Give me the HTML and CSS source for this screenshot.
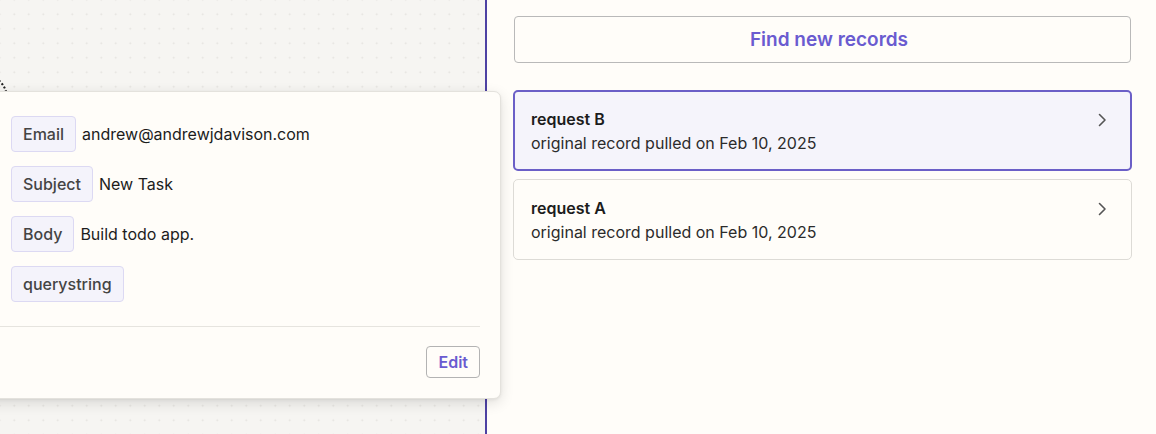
FILE: index.html
```html
<!DOCTYPE html>
<html>
<head>
<meta charset="utf-8">
<link rel="stylesheet" href="styles.css">
</head>
<body>
<div class="app">
  <div class="canvas">
    <div class="node-ring"></div>
  </div>
  <div class="panel">
    <button class="find-btn">Find new records</button>
    <div class="records">
      <div class="record selected">
        <div class="record-text">
          <div class="record-title">request B</div>
          <div class="record-sub">original record pulled on Feb 10, 2025</div>
        </div>
        <svg class="chev" width="12" height="16" viewBox="0 0 12 16"><path d="M3.5 2.5 L9 8 L3.5 13.5" fill="none" stroke="#555" stroke-width="1.6" stroke-linecap="round" stroke-linejoin="round"/></svg>
      </div>
      <div class="record">
        <div class="record-text">
          <div class="record-title">request A</div>
          <div class="record-sub">original record pulled on Feb 10, 2025</div>
        </div>
        <svg class="chev" width="12" height="16" viewBox="0 0 12 16"><path d="M3.5 2.5 L9 8 L3.5 13.5" fill="none" stroke="#555" stroke-width="1.6" stroke-linecap="round" stroke-linejoin="round"/></svg>
      </div>
    </div>
  </div>
  <div class="popover">
    <div class="fields">
      <div class="field"><span class="tag">Email</span><span class="val">andrew@andrewjdavison.com</span></div>
      <div class="field"><span class="tag">Subject</span><span class="val">New Task</span></div>
      <div class="field"><span class="tag">Body</span><span class="val">Build todo app.</span></div>
      <div class="field"><span class="tag">querystring</span></div>
    </div>
    <div class="pop-footer">
      <button class="edit-btn">Edit</button>
    </div>
  </div>
</div>
</body>
</html>
```
FILE: styles.css
```css
* { box-sizing: border-box; }
html, body { margin: 0; padding: 0; }
body {
  width: 1156px;
  height: 434px;
  overflow: hidden;
  font-family: Inter, "Noto Sans", sans-serif;
  background: #fffdf9;
}
.app {
  position: relative;
  display: flex;
  height: 434px;
}
.canvas {
  position: relative;
  width: 487px;
  flex: none;
  background-color: #f6f5f2;
  background-image: radial-gradient(circle, #e2e1dd 0.8px, transparent 1.1px);
  background-size: 14.5px 14.5px;
  background-position: 7px 7px;
  border-right: 2px solid #4d41a3;
}
.node-ring {
  position: absolute;
  left: -40px;
  top: 74px;
  width: 48px;
  height: 48px;
  border-radius: 50%;
  border: 2px dotted #222;
}
.panel {
  flex: 1;
  padding: 16px 25px 0 26px;
  display: flex;
  flex-direction: column;
}
.find-btn {
  height: 47px;
  margin: 0 0 0 1px;
  padding: 0 0 0 13px;
  background: #fffdf9;
  border: 1px solid #b9b9b9;
  border-radius: 4px;
  font-family: Inter, sans-serif;
  font-size: 19px;
  font-weight: 600;
  color: #6a5bd0;
}
.records {
  margin-top: 27px;
  margin-right: -1px;
  display: flex;
  flex-direction: column;
  gap: 8px;
}
.record {
  height: 81px;
  display: flex;
  align-items: flex-start;
  justify-content: space-between;
  border: 1px solid #dddbd6;
  border-radius: 5px;
  padding: 18px 23px 0 17px;
  background: #fffdf9;
}
.record.selected {
  border: 2px solid #6b5fc7;
  background: #f5f4fb;
  padding: 17px 22px 0 16px;
}
.record-title {
  font-size: 16px;
  line-height: 20px;
  font-weight: 600;
  color: #1c1c1c;
}
.record-sub {
  margin-top: 3px;
  font-size: 16px;
  line-height: 22px;
  color: #2b2b2b;
}
.chev { margin-top: 3px; }
.popover {
  position: absolute;
  left: -20px;
  top: 91px;
  width: 521px;
  height: 308px;
  background: #fffdf9;
  border: 1px solid #e4e2dd;
  border-radius: 7px;
  box-shadow: 0 4px 14px rgba(0,0,0,0.12), 0 1px 3px rgba(0,0,0,0.06);
  padding: 24px 20px 19px 30px;
  display: flex;
  flex-direction: column;
}
.fields {
  display: flex;
  flex-direction: column;
  gap: 14px;
}
.field {
  display: flex;
  align-items: center;
  gap: 6px;
}
.tag {
  height: 36px;
  display: inline-flex;
  align-items: center;
  padding: 0 11px;
  background: #f4f3fb;
  border: 1px solid #dcd9f3;
  border-radius: 4px;
  font-size: 16px;
  font-weight: 500;
  color: #444;
}
.val {
  font-size: 16px;
  color: #1c1c1c;
}
.pop-footer {
  margin-top: 24px;
  margin-left: -16px;
  border-top: 1px solid #e6e4df;
  padding-top: 19px;
  display: flex;
  justify-content: flex-end;
}
.edit-btn {
  height: 32px;
  padding: 0 11px;
  background: #fffdf9;
  border: 1px solid #b3b3b3;
  border-radius: 4px;
  font-family: Inter, sans-serif;
  font-size: 16px;
  font-weight: 600;
  color: #6a5bd0;
}
```
